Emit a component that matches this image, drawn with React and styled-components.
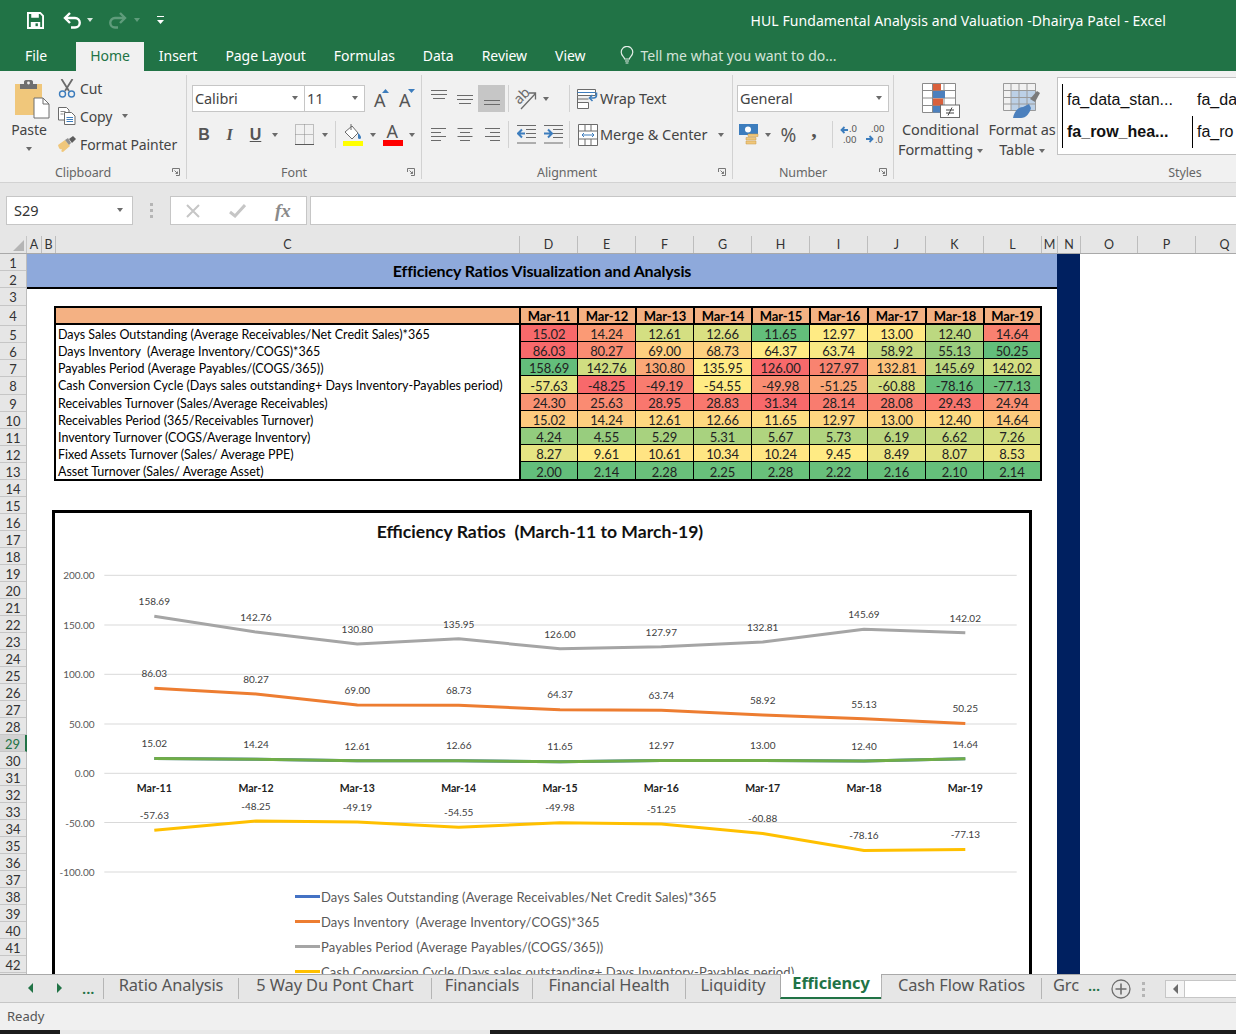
import React from 'react';
import styled, { createGlobalStyle } from 'styled-components';

const UI = '"Noto Sans", "Open Sans", sans-serif';
const CELL = 'Lato, "Open Sans", sans-serif';
const GREEN = '#217346';

const RIBBON_TABS = ['Insert', 'Page Layout', 'Formulas', 'Data', 'Review', 'View'];

const COLUMNS = [
  ['A', 15], ['B', 14], ['C', 464], ['D', 58], ['E', 58], ['F', 58], ['G', 58], ['H', 58], ['I', 58],
  ['J', 58], ['K', 58], ['L', 58], ['M', 16], ['N', 23], ['O', 57], ['P', 58], ['Q', 58],
];

const ROW_HEIGHTS = { 1: 17, 2: 17, 3: 18, 4: 20, 8: 18 };
const ROWS = Array.from({ length: 42 }, (_, i) => i + 1);

const MONTHS = ['Mar-11', 'Mar-12', 'Mar-13', 'Mar-14', 'Mar-15', 'Mar-16', 'Mar-17', 'Mar-18', 'Mar-19'];

const RATIOS = [
  { label: 'Days Sales Outstanding (Average Receivables/Net Credit Sales)*365', values: ['15.02', '14.24', '12.61', '12.66', '11.65', '12.97', '13.00', '12.40', '14.64'], scale: 'a' },
  { label: 'Days Inventory  (Average Inventory/COGS)*365', values: ['86.03', '80.27', '69.00', '68.73', '64.37', '63.74', '58.92', '55.13', '50.25'], scale: 'b' },
  { label: 'Payables Period (Average Payables/(COGS/365))', values: ['158.69', '142.76', '130.80', '135.95', '126.00', '127.97', '132.81', '145.69', '142.02'], scale: 'c', highGood: true },
  { label: 'Cash Conversion Cycle (Days sales outstanding+ Days Inventory-Payables period)', values: ['-57.63', '-48.25', '-49.19', '-54.55', '-49.98', '-51.25', '-60.88', '-78.16', '-77.13'], scale: 'd', tall: true },
  { label: 'Receivables Turnover (Sales/Average Receivables)', values: ['24.30', '25.63', '28.95', '28.83', '31.34', '28.14', '28.08', '29.43', '24.94'], scale: 'e' },
  { label: 'Receivables Period (365/Receivables Turnover)', values: ['15.02', '14.24', '12.61', '12.66', '11.65', '12.97', '13.00', '12.40', '14.64'], scale: 'e' },
  { label: 'Inventory Turnover (COGS/Average Inventory)', values: ['4.24', '4.55', '5.29', '5.31', '5.67', '5.73', '6.19', '6.62', '7.26'], scale: 'e' },
  { label: 'Fixed Assets Turnover (Sales/ Average PPE)', values: ['8.27', '9.61', '10.61', '10.34', '10.24', '9.45', '8.49', '8.07', '8.53'], scale: 'e' },
  { label: 'Asset Turnover (Sales/ Average Asset)', values: ['2.00', '2.14', '2.28', '2.25', '2.28', '2.22', '2.16', '2.10', '2.14'], scale: 'e' },
];

const RED = [248, 105, 107];
const YELLOW = [255, 235, 132];
const LIME = [99, 190, 123];

const scaleStats = {};
RATIOS.forEach(r => {
  scaleStats[r.scale] = (scaleStats[r.scale] || []).concat(r.values.map(Number));
});
Object.keys(scaleStats).forEach(k => {
  const s = [...scaleStats[k]].sort((a, b) => a - b);
  scaleStats[k] = { min: s[0], mid: s[Math.floor(s.length / 2)], max: s[s.length - 1] };
});

const mix = (a, b, t) => `rgb(${a.map((v, i) => Math.round(v + (b[i] - v) * t)).join(',')})`;

const cellColor = (value, { scale, highGood }) => {
  const { min, mid, max } = scaleStats[scale];
  const v = Number(value);
  const low = highGood ? RED : LIME;
  const high = highGood ? LIME : RED;
  if (v <= mid) return mix(low, YELLOW, (v - min) / (mid - min));
  return mix(YELLOW, high, (v - mid) / (max - mid));
};

const AXIS = ['200.00', '150.00', '100.00', '50.00', '0.00', '-50.00', '-100.00'];
const AXIS_Y = [575.3, 625, 674.3, 724, 773.3, 822.5, 872];
const POINT_X = [154.3, 256, 357.3, 458.7, 560, 661.3, 762.7, 864, 965.3];
const yOf = v => 773.3 - v * 0.989;

const SERIES = [
  { color: '#4472c4', row: 0, labels: null },
  { color: '#ed7d31', row: 1, labels: [673.3, 679.3, 690.3, 690.3, 694.3, 695.3, 700.3, 704.3, 708.3] },
  { color: '#a5a5a5', row: 2, labels: [601.3, 617.3, 629.3, 624.3, 634.3, 632.3, 627.3, 614.3, 618.3] },
  { color: '#ffc000', row: 3, labels: [815.3, 806.3, 807.3, 812.3, 807.3, 809.3, 818.3, 835.3, 834.3] },
  { color: '#70ad47', row: 5, labels: [743.3, 744.3, 746.3, 745.3, 746.3, 745.3, 745.3, 746.3, 744.3] },
];

const LEGEND = [
  ['#4472c4', RATIOS[0].label],
  ['#ed7d31', RATIOS[1].label],
  ['#a5a5a5', RATIOS[2].label],
  ['#ffc000', RATIOS[3].label],
];

const SHEET_TABS = [
  { name: 'Ratio Analysis', w: 135 },
  { name: '5 Way Du Pont Chart', w: 193 },
  { name: 'Financials', w: 101 },
  { name: 'Financial Health', w: 153 },
  { name: 'Liquidity', w: 95 },
  { name: 'Efficiency', w: 102, active: true },
  { name: 'Cash Flow Ratios', w: 160 },
];

const App = () => (
  <Window>
    <GlobalStyle />
    <TitleBar>
      <QuickAccess>
        <svg width="17" height="17" viewBox="0 0 18 18">
          <path d="M1 1h13l3 3v13H1z" fill="none" stroke="#fff" strokeWidth="2" />
          <path d="M4.5 1.5h8v4.5h-8zM4 10.5h10V16H4z" fill="#fff" />
          <path d="M9 12h2.5v3H9z" fill={GREEN} />
        </svg>
        <UndoIcon />
        <Caret $color="#d8e8de" $left={5} />
        <RedoIcon />
        <Caret $color="#5f9c7b" $left={7} />
        <CustomizeIcon />
      </QuickAccess>
      <WindowTitle>HUL Fundamental Analysis and Valuation -Dhairya Patel - Excel</WindowTitle>
    </TitleBar>

    <TabStrip>
      <RibbonTab>File</RibbonTab>
      <RibbonTab $active>Home</RibbonTab>
      {RIBBON_TABS.map(tab => (
        <RibbonTab key={tab}>{tab}</RibbonTab>
      ))}
      <TellMe>
        <svg width="14" height="19" viewBox="0 0 14 19" fill="none" stroke="#e4eee8" strokeWidth="1.2">
          <path d="M4.6 13c0-2-3.4-3.4-3.4-6.8a5.8 5.8 0 0 1 11.6 0c0 3.4-3.4 4.8-3.4 6.8z" />
          <path d="M5 15h4M5.6 17h2.8" />
        </svg>
        Tell me what you want to do...
      </TellMe>
    </TabStrip>

    <Ribbon>
      <Group $width={187}>
        <GroupBody $row>
          <PasteButton>
            <PasteIcon />
            <PasteLabel>Paste</PasteLabel>
            <Caret />
          </PasteButton>
          <ClipboardList>
            <ClipRow><CutIcon /><span>Cut</span></ClipRow>
            <ClipRow><CopyIcon /><span>Copy</span><Caret $left={10} /></ClipRow>
            <ClipRow><PainterIcon /><span>Format Painter</span></ClipRow>
          </ClipboardList>
        </GroupBody>
        <GroupFooter>Clipboard<Launcher /></GroupFooter>
      </Group>

      <Group $width={235}>
        <GroupBody $pad={5}>
          <ToolRow>
            <Combo $w={113}>Calibri<Caret $right /></Combo>
            <Combo $w={61} $noLeft>11<Caret $right /></Combo>
            <Tool $w={26} $left={4}><GrowFont up /></Tool>
            <Tool $w={24}><GrowFont /></Tool>
          </ToolRow>
          <ToolRow>
            <Tool $w={24}><LetterB>B</LetterB></Tool>
            <Tool $w={27}><LetterI>I</LetterI></Tool>
            <Tool $w={25}><LetterU>U</LetterU></Tool>
            <Tool $w={14}><Caret /></Tool>
            <Tool $w={26} $left={9}><BordersIcon /></Tool>
            <Tool $w={15}><Caret /></Tool>
            <RowSep $left={3} />
            <Tool $w={28} $left={3}><FillIcon /></Tool>
            <Tool $w={11}><Caret /></Tool>
            <Tool $w={28} $left={1}><FontColorIcon /></Tool>
            <Tool $w={10}><Caret /></Tool>
          </ToolRow>
        </GroupBody>
        <GroupFooter>Font<Launcher /></GroupFooter>
      </Group>

      <Group $width={311}>
        <GroupBody $pad={3}>
          <ToolRow>
            <Tool $w={27}><AlignIcon widths={[16, 16, 12]} top={1} /></Tool>
            <Tool $w={26}><AlignIcon widths={[16, 16, 12]} top={6} /></Tool>
            <Tool $w={27} $selected><AlignIcon widths={[16, 16, 12]} top={11} /></Tool>
            <RowSep $left={3} />
            <Tool $w={31} $left={1}><OrientationIcon /></Tool>
            <Tool $w={10}><Caret /></Tool>
            <RowSep $left={18} />
            <Tool $w={25} $left={5}><WrapIcon /></Tool>
            <ToolText>Wrap Text</ToolText>
          </ToolRow>
          <ToolRow>
            <Tool $w={27}><AlignIcon widths={[15, 10, 15, 10]} align="start" /></Tool>
            <Tool $w={26}><AlignIcon widths={[15, 10, 15, 10]} align="middle" /></Tool>
            <Tool $w={27}><AlignIcon widths={[15, 10, 15, 10]} align="end" /></Tool>
            <RowSep $left={3} />
            <Tool $w={33} $left={1}><IndentIcon /></Tool>
            <Tool $w={21}><IndentIcon right /></Tool>
            <RowSep $left={5} />
            <Tool $w={25} $left={5}><MergeIcon /></Tool>
            <ToolText $wide>Merge &amp; Center</ToolText>
            <Caret $left={11} />
          </ToolRow>
        </GroupBody>
        <GroupFooter>Alignment<Launcher /></GroupFooter>
      </Group>

      <Group $width={161}>
        <GroupBody $pad={4}>
          <ToolRow>
            <Combo $w={152}>General<Caret $right /></Combo>
          </ToolRow>
          <ToolRow>
            <Tool $w={24}><CurrencyIcon /></Tool>
            <Tool $w={14}><Caret /></Tool>
            <Tool $w={27}><Percent>%</Percent></Tool>
            <Tool $w={24}><Comma>,</Comma></Tool>
            <RowSep $left={6} />
            <Tool $w={27} $left={3}><DecimalIcon /></Tool>
            <Tool $w={25}><DecimalIcon more /></Tool>
          </ToolRow>
        </GroupBody>
        <GroupFooter>Number<Launcher /></GroupFooter>
      </Group>

      <Group $width={582} $last>
        <GroupBody $row>
          <BigButton $w={93}>
            <ConditionalIcon />
            <BigLabel>Conditional</BigLabel>
            <BigLabel>Formatting<Caret $left={4} /></BigLabel>
          </BigButton>
          <BigButton $w={70}>
            <TableStyleIcon />
            <BigLabel>Format as</BigLabel>
            <BigLabel>Table<Caret $left={4} /></BigLabel>
          </BigButton>
          <Gallery>
            <StyleCell $line>fa_data_stan...</StyleCell>
            <StyleCell>fa_da</StyleCell>
            <StyleCell $line $bold>fa_row_hea...</StyleCell>
            <StyleCell $line>fa_ro</StyleCell>
          </Gallery>
        </GroupBody>
        <GroupFooter $plain>Styles</GroupFooter>
      </Group>
    </Ribbon>

    <FormulaBar>
      <NameBox>S29<Caret $right /></NameBox>
      <Grip />
      <FormulaButtons>
        <svg width="14" height="14" viewBox="0 0 14 14" stroke="#c6c6c6" strokeWidth="2"><path d="M1 1l12 12M13 1L1 13" /></svg>
        <svg width="17" height="14" viewBox="0 0 17 14" fill="none" stroke="#c6c6c6" strokeWidth="3"><path d="M1 8l5 4L16 1" /></svg>
        <FxLabel>fx</FxLabel>
      </FormulaButtons>
      <FormulaInput />
    </FormulaBar>

    <ColumnHeader>
      <Corner>
        <svg width="12" height="12" viewBox="0 0 12 12"><path d="M12 1v11H1z" fill="#b5b5b5" /></svg>
      </Corner>
      {COLUMNS.map(([name, w]) => (
        <ColumnCell key={name} $w={w}>{name}</ColumnCell>
      ))}
    </ColumnHeader>

    <Sheet>
      <RowHeader>
        {ROWS.map(n => (
          <RowCell key={n} $h={ROW_HEIGHTS[n] || 17} $active={n === 29}>{n}</RowCell>
        ))}
      </RowHeader>
      <SheetBody>
        <Banner>Efficiency Ratios Visualization and Analysis</Banner>
        <RatioTable>
          <HeadRow>
            <HeadBlank />
            {MONTHS.map(m => (
              <HeadCell key={m}>{m}</HeadCell>
            ))}
          </HeadRow>
          {RATIOS.map(row => (
            <DataRow key={row.label} $tall={row.tall}>
              <LabelCell>{row.label}</LabelCell>
              {row.values.map((v, i) => (
                <ValueCell key={i} style={{ background: cellColor(v, row) }}>{v}</ValueCell>
              ))}
            </DataRow>
          ))}
        </RatioTable>
        <ChartFrame>
          <ChartTitle>Efficiency Ratios  (March-11 to March-19)</ChartTitle>
          <PlotSvg width="974" height="331" viewBox="55 553 974 331">
            {AXIS.map((label, i) => (
              <g key={label}>
                <line x1="104.3" x2="1016.7" y1={AXIS_Y[i]} y2={AXIS_Y[i]} stroke="#d9d9d9" strokeWidth="1" />
                <AxisText x="94.5" y={AXIS_Y[i]} textAnchor="end" dominantBaseline="central">{label}</AxisText>
              </g>
            ))}
            {SERIES.map(s => (
              <polyline
                key={s.color}
                fill="none"
                stroke={s.color}
                strokeWidth="3"
                strokeLinejoin="round"
                points={RATIOS[s.row].values.map((v, i) => `${POINT_X[i]},${yOf(Number(v))}`).join(' ')}
              />
            ))}
            {SERIES.filter(s => s.labels).map(s =>
              RATIOS[s.row].values.map((v, i) => (
                <DataText key={s.color + i} x={POINT_X[i]} y={s.labels[i]} textAnchor="middle" dominantBaseline="central">{v}</DataText>
              ))
            )}
            {MONTHS.map((m, i) => (
              <MonthText key={m} x={POINT_X[i]} y="788" textAnchor="middle" dominantBaseline="central">{m}</MonthText>
            ))}
          </PlotSvg>
          <Legend>
            {LEGEND.map(([color, label]) => (
              <LegendRow key={label}>
                <LegendLine $color={color} />
                {label}
              </LegendRow>
            ))}
          </Legend>
        </ChartFrame>
      </SheetBody>
      <NavyColumn />
    </Sheet>

    <SheetTabBar>
      <TabNav>
        <NavArrow $left />
        <NavArrow />
        <NavDots>...</NavDots>
      </TabNav>
      {SHEET_TABS.map(tab => (
        <SheetTab key={tab.name} $w={tab.w} $active={tab.active}>{tab.name}</SheetTab>
      ))}
      <SheetTab $w={62} $shift>
        Grc <NavDots $inline>...</NavDots>
      </SheetTab>
      <AddSheet>
        <svg width="20" height="20" viewBox="0 0 20 20" fill="none" stroke="#6f6f6f">
          <circle cx="10" cy="10" r="9" strokeWidth="1.3" />
          <path d="M10 4.5v11M4.5 10h11" strokeWidth="1.6" />
        </svg>
      </AddSheet>
      <TabGrip />
      <ScrollButton><NavArrow $left $grey /></ScrollButton>
      <ScrollTrack />
    </SheetTabBar>

    <StatusBar>Ready</StatusBar>
    <BottomStrip>
      <StripDark $w={60} />
      <StripLight />
      <StripDark $grow />
    </BottomStrip>
  </Window>
);

const UndoIcon = () => (
  <svg width="19" height="17" viewBox="0 0 19 17" fill="none" stroke="#fff" strokeWidth="2.4" style={{ marginLeft: 19 }}>
    <path d="M7 1L2 6l5 5" />
    <path d="M2 6h10a4.6 4.6 0 0 1 0 9.5H8" />
  </svg>
);

const RedoIcon = () => (
  <svg width="19" height="17" viewBox="0 0 19 17" fill="none" stroke="#5f9c7b" strokeWidth="2.4" style={{ marginLeft: 15 }}>
    <path d="M12 1l5 5-5 5" />
    <path d="M17 6H7a4.6 4.6 0 0 0 0 9.5h3" />
  </svg>
);

const CustomizeIcon = () => (
  <svg width="7" height="10" viewBox="0 0 7 10" fill="#fff" style={{ marginLeft: 17 }}>
    <path d="M0 1h7v1H0zM0 5h7L3.5 9z" />
  </svg>
);

const Launcher = () => (
  <LauncherBox>
    <svg width="8" height="8" viewBox="0 0 8 8" fill="none" stroke="#777">
      <path d="M.5 4V.5H7.5M7.5.5v7H4" />
      <path d="M2.5 2.5l3 3M5.5 3.5v2h-2" />
    </svg>
  </LauncherBox>
);

const PasteIcon = () => (
  <svg width="36" height="40" viewBox="0 0 36 40" style={{ marginLeft: 6 }}>
    <rect x="1" y="5" width="27" height="31" fill="#f0c77b" />
    <path d="M6 5h4V2.5A2 2 0 0 1 12 1h5a2 2 0 0 1 2 1.5V5h4v5H6z" fill="#6f6f6f" />
    <circle cx="14.5" cy="4" r="1.4" fill="#f1f1f1" />
    <path d="M20 19h9l6 6v14H20z" fill="#fff" stroke="#6f6f6f" />
    <path d="M29 19v6h6" fill="none" stroke="#6f6f6f" />
  </svg>
);

const CutIcon = () => (
  <svg width="17" height="19" viewBox="0 0 17 19" fill="none">
    <path d="M3 0l7.5 12M14 0L6.5 12" stroke="#6b6b6b" strokeWidth="1.8" />
    <circle cx="4" cy="15" r="3" stroke="#3d7dbd" strokeWidth="1.4" />
    <circle cx="13" cy="15" r="3" stroke="#3d7dbd" strokeWidth="1.4" />
  </svg>
);

const CopyIcon = () => (
  <svg width="18" height="18" viewBox="0 0 18 18" fill="#fff" stroke="#6b6b6b">
    <path d="M.5.5h8l2.5 2.5v10H.5z" />
    <path d="M6.5 5.5h7l3.5 3.5v8.5H6.5z" />
    <path d="M8.5 10.5h6.5M8.5 12.5h6.5M8.5 14.5h6.5" stroke="#3d7dbd" />
    <path d="M2.5 4.5h5M2.5 7h3" stroke="#8a8a8a" />
  </svg>
);

const PainterIcon = () => (
  <svg width="18" height="16" viewBox="0 0 18 16">
    <path d="M0 9l7-5 5 6-7 6c-2 0-2-1-1-3-2 1-3 0-4-4z" fill="#f0c77b" />
    <path d="M7 4l3-2 3 5-2 2z" fill="#8f8f8f" />
    <path d="M11 3l4-3 3 3-4 4z" fill="#5d5d5d" />
  </svg>
);

const GrowFont = ({ up }) => (
  <svg width="17" height="20" viewBox="0 0 17 20" overflow="visible">
    <FontGlyph x="0" y="18">A</FontGlyph>
    <path d={up ? 'M8 4l3.5-4L15 4z' : 'M9 0h7l-3.5 4z'} fill="#3d7dbd" />
  </svg>
);

const BordersIcon = () => (
  <svg width="19" height="21" viewBox="0 0 19 21" fill="none" stroke="#8a8a8a" strokeDasharray="1 1">
    <path d="M.5.5h18v20H.5zM9.5.5v20M.5 10.5h18" />
    <path d="M0 20.5h19" stroke="#5a5a5a" strokeDasharray="none" />
  </svg>
);

const FillIcon = () => (
  <svg width="20" height="23" viewBox="0 0 20 23">
    <path d="M2 9l7-6 6 7-6 6z" fill="#fff" stroke="#6b6b6b" />
    <path d="M8 1v6" stroke="#6b6b6b" />
    <path d="M15 10c2 2 3 3 3 4.5a1.5 1.5 0 0 1-3 0z" fill="#3d7dbd" />
    <rect x="0" y="18" width="20" height="5" fill="#ffff00" />
  </svg>
);

const FontColorIcon = () => (
  <svg width="20" height="23" viewBox="0 0 20 23" overflow="visible">
    <FontGlyph x="3.5" y="15">A</FontGlyph>
    <rect x="0" y="17" width="20" height="6" fill="#ff0000" />
  </svg>
);

const AlignIcon = ({ widths, top = 1, align }) => {
  const W = 18;
  return (
    <svg width="18" height="19" viewBox="0 0 18 19" stroke="#6b6b6b">
      {widths.map((w, i) => {
        let x = (W - w) / 2;
        if (align === 'start') x = 1;
        if (align === 'end') x = W - w - 1;
        const y = (align ? 3 : top) + i * 4 + 0.5;
        return <line key={i} x1={x} x2={x + w} y1={y} y2={y} />;
      })}
    </svg>
  );
};

const OrientationIcon = () => (
  <svg width="24" height="22" viewBox="0 0 24 22" overflow="visible">
    <OrientText x="1" y="13" transform="rotate(-45 8 10)">ab</OrientText>
    <path d="M7 21L21 6M15 5h6.5v6.5" fill="none" stroke="#6b6b6b" strokeWidth="1.3" />
  </svg>
);

const WrapIcon = () => (
  <svg width="21" height="22" viewBox="0 0 21 22" fill="none" stroke="#6b6b6b">
    <path d="M.5 1.5h18v6H.5zM.5 7.5v13h11v-6H.5M.5 11h11" fill="#fff" />
    <path d="M.5 4.5h18" stroke="#3d7dbd" />
    <path d="M13 10h3.5a3 3 0 0 0 3-3V4.5" stroke="#3d7dbd" strokeWidth="1.6" />
    <path d="M15.5 7l-3 3 3 3" stroke="#3d7dbd" strokeWidth="1.6" />
  </svg>
);

const MergeIcon = () => (
  <svg width="20" height="22" viewBox="0 0 20 22" fill="none" stroke="#6b6b6b">
    <path d="M.5.5h19v21H.5zM.5 7h19M.5 15h19M7 .5V7M13 .5V7M7 15v6.5M13 15v6.5" fill="#fff" />
    <path d="M4 11h12M6 9l-2 2 2 2M14 9l2 2-2 2" stroke="#3d7dbd" />
  </svg>
);

const IndentIcon = ({ right }) => (
  <svg width="19" height="19" viewBox="0 0 19 19" fill="none">
    <path d="M0 .5h19M9 4.5h10M9 8.5h10M9 12.5h10M0 18h19" stroke="#6b6b6b" />
    <path d={right ? 'M0 8.5h7M4 4.5l4 4-4 4' : 'M8 8.5H1M5 4.5l-4 4 4 4'} stroke="#3d7dbd" strokeWidth="2" />
  </svg>
);

const CurrencyIcon = () => (
  <svg width="20" height="21" viewBox="0 0 20 21">
    <rect x="0" y="0" width="19" height="11" fill="#3d7dbd" />
    <circle cx="9" cy="5.5" r="3" fill="#fff" />
    <path d="M9 10h10v2.5H9zM7 13.5h10V16H7zM7 17h10v3H7z" fill="#f0c77b" stroke="#c89b4a" strokeWidth=".5" />
  </svg>
);

const DecimalIcon = ({ more }) => (
  <svg width="19" height="19" viewBox="0 0 19 19" overflow="visible">
    {more ? (
      <>
        <DecimalText x="5" y="7">.00</DecimalText>
        <path d="M0 14h6M3.5 11l3 3-3 3" fill="none" stroke="#3d7dbd" strokeWidth="1.8" />
        <DecimalText x="9" y="18">.0</DecimalText>
      </>
    ) : (
      <>
        <path d="M8 5H2M4.5 2l-3 3 3 3" fill="none" stroke="#3d7dbd" strokeWidth="1.8" />
        <DecimalText x="9" y="7">.0</DecimalText>
        <DecimalText x="3" y="18">.00</DecimalText>
      </>
    )}
  </svg>
);

const ConditionalIcon = () => (
  <svg width="38" height="35" viewBox="0 0 38 35">
    <path d="M.5.5h33v29H.5zM.5 7.5h33M.5 15h33M.5 22.5h33M10.5.5v29M22 .5v29" fill="#fff" stroke="#8a8a8a" />
    <rect x="11" y="1" width="8" height="6.5" fill="#d9603c" />
    <rect x="11" y="8" width="12" height="7" fill="#4c80bd" />
    <rect x="11" y="15.5" width="10" height="7" fill="#d9603c" />
    <rect x="11" y="23" width="7" height="6.5" fill="#4c80bd" />
    <rect x="18.5" y="22" width="19" height="12.5" fill="#fff" stroke="#6b6b6b" />
    <path d="M24 27h8M24 30h8M30 24.5l-4 8" stroke="#444" fill="none" />
  </svg>
);

const TableStyleIcon = () => (
  <svg width="38" height="35" viewBox="0 0 38 35">
    <rect x="8" y="8" width="25" height="20" fill="#bcd0e6" />
    <path d="M.5.5h32v27H.5zM.5 7.5h32M.5 14.5h32M.5 21h32M8 .5v27M16 .5v27M24 .5v27" fill="none" stroke="#9a9a9a" />
    <path d="M27 16l7-8 3 2-5 9z" fill="#7b7b7b" />
    <path d="M10 35c1-6 5-11 10-11l6-3 2 4c-1 5-5 10-10 10z" fill="#4c80bd" />
  </svg>
);

const GlobalStyle = createGlobalStyle`
  html, body {
    margin: 0;
    padding: 0;
    background: #fff;
  }
  * {
    box-sizing: border-box;
  }
`;

const Window = styled.div`
  width: 1236px;
  height: 1034px;
  display: flex;
  flex-direction: column;
  overflow: hidden;
  font-family: ${UI};
  color: #444;
`;

const TitleBar = styled.div`
  height: 42px;
  flex: none;
  display: flex;
  align-items: center;
  background: ${GREEN};
  color: #fff;
`;

const QuickAccess = styled.div`
  display: flex;
  align-items: center;
  padding: 0 0 2px 27px;
`;

const WindowTitle = styled.div`
  margin-left: auto;
  padding: 0 70px 2px 0;
  font-size: 14px;
  letter-spacing: 0.08px;
`;

const Caret = styled.span`
  display: inline-block;
  width: 0;
  height: 0;
  flex: none;
  border-left: 3.5px solid transparent;
  border-right: 3.5px solid transparent;
  border-top: 4px solid ${p => p.$color || '#6b6b6b'};
  margin-left: ${p => (p.$right ? 'auto' : `${p.$left || 0}px`)};
  vertical-align: middle;
`;

const TabStrip = styled.div`
  height: 29px;
  flex: none;
  display: flex;
  align-items: stretch;
  padding-left: 11px;
  background: ${GREEN};
`;

const RibbonTab = styled.div`
  display: flex;
  align-items: center;
  padding: 0 14px 3px;
  margin: 0 ${p => (p.$active ? '1px' : 0)} 0 ${p => (p.$active ? '15px' : 0)};
  font-size: 14px;
  letter-spacing: -0.05px;
  color: ${p => (p.$active ? GREEN : '#fff')};
  background: ${p => (p.$active ? '#f1f1f1' : 'transparent')};
`;

const TellMe = styled.div`
  display: flex;
  align-items: center;
  gap: 6px;
  margin-left: 21px;
  padding-bottom: 3px;
  font-size: 14px;
  color: #d3e3d9;
`;

const Ribbon = styled.div`
  height: 112px;
  flex: none;
  display: flex;
  align-items: stretch;
  padding: 4px 0 3px;
  background: #f1f1f1;
  border-bottom: 1px solid #d2d2d2;
`;

const Group = styled.div`
  flex: 0 0 ${p => p.$width}px;
  display: flex;
  flex-direction: column;
  border-right: ${p => (p.$last ? 'none' : '1px solid #d2d2d2')};
`;

const GroupBody = styled.div`
  height: 89px;
  display: flex;
  flex-direction: ${p => (p.$row ? 'row' : 'column')};
  gap: ${p => (p.$row ? 0 : '9px')};
  padding: ${p => (p.$row ? '0' : `10px 0 0 ${p.$pad}px`)};
`;

const GroupFooter = styled.div`
  height: 15px;
  position: relative;
  padding: 1px ${p => (p.$plain ? 0 : '20px')} 0 0;
  font-size: 12.5px;
  line-height: 15px;
  letter-spacing: -0.1px;
  text-align: center;
  color: #666;
`;

const LauncherBox = styled.span`
  position: absolute;
  right: 6px;
  top: 4px;
  display: flex;
`;

const PasteButton = styled.div`
  width: 58px;
  display: flex;
  flex-direction: column;
  align-items: center;
  padding-top: 4px;
  color: #444;
`;

const PasteLabel = styled.div`
  font-size: 14px;
  line-height: 20px;
  margin: 1px 0 7px;
  letter-spacing: -0.1px;
`;

const ClipboardList = styled.div`
  display: flex;
  flex-direction: column;
  margin-top: -1px;
`;

const ClipRow = styled.div`
  height: 28px;
  display: flex;
  align-items: center;
  font-size: 14px;
  letter-spacing: -0.1px;
  color: #444;
  white-space: nowrap;

  svg {
    width: 18px;
    margin-right: 4px;
    flex: none;
  }
`;

const ToolRow = styled.div`
  height: 27px;
  display: flex;
  align-items: center;
`;

const Tool = styled.div`
  flex: 0 0 ${p => p.$w}px;
  height: 27px;
  margin-left: ${p => p.$left || 0}px;
  display: flex;
  align-items: center;
  justify-content: center;
  background: ${p => (p.$selected ? '#c6c6c6' : 'transparent')};
`;

const RowSep = styled.div`
  width: 1px;
  height: 27px;
  flex: none;
  margin-left: ${p => p.$left || 0}px;
  background: #d2d2d2;
`;

const ToolText = styled.span`
  padding-bottom: 2px;
  font-size: 14.5px;
  letter-spacing: ${p => (p.$wide ? '-0.05px' : '-0.15px')};
  color: #444;
  white-space: nowrap;
`;

const Combo = styled.div`
  flex: 0 0 ${p => p.$w}px;
  height: 27px;
  display: flex;
  align-items: center;
  padding: 0 6px 2px 2px;
  margin-left: ${p => (p.$noLeft ? '-1px' : 0)};
  background: #fff;
  border: 1px solid #c6c6c6;
  font-size: 14.5px;
  letter-spacing: -0.1px;
  color: #444;
`;

const LetterB = styled.span`
  font: bold 16px "Liberation Sans", sans-serif;
  color: #555;
`;

const LetterI = styled.span`
  font: italic bold 16px "Liberation Serif", serif;
  color: #555;
`;

const LetterU = styled.span`
  font: bold 16px "Liberation Sans", sans-serif;
  color: #555;
  text-decoration: underline;
`;

const FontGlyph = styled.text`
  font: 18px ${UI};
  fill: #555;
`;

const OrientText = styled.text`
  font: 14px ${UI};
  fill: #6b6b6b;
`;

const DecimalText = styled.text`
  font: 9.5px ${UI};
  fill: #555;
`;

const Percent = styled.span`
  font-size: 19px;
  color: #555;
`;

const Comma = styled.span`
  font: bold 22px "Liberation Serif", serif;
  color: #555;
  margin-top: -10px;
`;

const BigButton = styled.div`
  flex: 0 0 ${p => p.$w}px;
  display: flex;
  flex-direction: column;
  align-items: center;
  padding-top: 8px;

  svg {
    margin-bottom: 1px;
  }
`;

const BigLabel = styled.div`
  font-size: 14.5px;
  line-height: 20px;
  letter-spacing: -0.1px;
  color: #444;
  white-space: nowrap;
`;

const Gallery = styled.div`
  width: 300px;
  height: 78px;
  margin: 2px 0 0 0;
  display: grid;
  grid-template-columns: 130px 1fr;
  grid-auto-rows: 1fr;
  padding: 6px 0 6px 4px;
  background: #fff;
  border: 1px solid #c2c2c2;
`;

const StyleCell = styled.div`
  display: flex;
  align-items: center;
  padding: 0 0 1px 4px;
  border-left: 1px solid ${p => (p.$line ? '#000' : 'transparent')};
  font: ${p => (p.$bold ? 'bold' : 'normal')} 16px "Liberation Sans", sans-serif;
  color: #111;
  white-space: nowrap;
`;

const FormulaBar = styled.div`
  height: 53px;
  flex: none;
  display: flex;
  align-items: flex-start;
  padding: 13px 0 0 6px;
  background: #e6e6e6;
`;

const NameBox = styled.div`
  width: 127px;
  height: 29px;
  display: flex;
  align-items: center;
  padding: 0 9px 1px 7px;
  background: #fff;
  border: 1px solid #c6c6c6;
  font-size: 14.5px;
  color: #333;
`;

const Grip = styled.div`
  width: 3px;
  height: 15px;
  margin: 7px 17px 0 17px;
  background: repeating-linear-gradient(#b5b5b5 0 3px, transparent 3px 6px);
`;

const FormulaButtons = styled.div`
  width: 137px;
  height: 29px;
  display: flex;
  align-items: center;
  gap: 29px;
  padding-left: 15px;
  background: #fff;
  border: 1px solid #c6c6c6;
`;

const FxLabel = styled.span`
  font: italic bold 19px "Liberation Serif", serif;
  color: #8a8a8a;
`;

const FormulaInput = styled.div`
  flex: 1;
  height: 29px;
  margin-left: 3px;
  background: #fff;
  border: 1px solid #c6c6c6;
  border-right: none;
`;

const ColumnHeader = styled.div`
  height: 18px;
  flex: none;
  display: flex;
  background: #e6e6e6;
  border-bottom: 1px solid #a9a9a9;
`;

const Corner = styled.div`
  flex: 0 0 27px;
  display: flex;
  align-items: flex-end;
  justify-content: flex-end;
  padding: 0 2px 2px 0;
  border-right: 1px solid #c6c6c6;
`;

const ColumnCell = styled.div`
  flex: 0 0 ${p => p.$w}px;
  display: flex;
  align-items: center;
  justify-content: center;
  font: 12.5px ${CELL};
  color: #333;
  border-right: 1px solid #bdbdbd;
`;

const Sheet = styled.div`
  height: 720px;
  flex: none;
  display: flex;
  overflow: hidden;
  background: #fff;
`;

const RowHeader = styled.div`
  flex: 0 0 27px;
  display: flex;
  flex-direction: column;
  background: #e6e6e6;
  border-right: 1px solid #bdbdbd;
`;

const RowCell = styled.div`
  flex: 0 0 ${p => p.$h}px;
  min-height: 0;
  display: flex;
  align-items: center;
  justify-content: center;
  padding-top: 1px;
  font: 13px/14px ${CELL};
  color: ${p => (p.$active ? GREEN : '#333')};
  background: ${p => (p.$active ? '#d2d2d2' : 'transparent')};
  border-bottom: 1px solid #c6c6c6;
  border-right: ${p => (p.$active ? `2px solid ${GREEN}` : 'none')};
  margin-right: ${p => (p.$active ? '-1px' : 0)};
`;

const SheetBody = styled.div`
  flex: 0 0 1030px;
  display: flex;
  flex-direction: column;
`;

const Banner = styled.div`
  height: 35px;
  flex: none;
  display: flex;
  align-items: center;
  justify-content: center;
  background: #8ea9db;
  border-bottom: 2px solid #000;
  font: bold 16px ${CELL};
  letter-spacing: -0.13px;
  color: #000;
`;

const RatioTable = styled.div`
  width: 988px;
  flex: none;
  margin: 17px 0 0 27px;
  border: 2px solid #000;
  color: #000;
`;

const HeadRow = styled.div`
  height: 17px;
  display: grid;
  grid-template-columns: 463px repeat(8, 58px) 57px;
  background: #f4b183;
  border-bottom: 2px solid #000;
`;

const HeadBlank = styled.div``;

const HeadCell = styled.div`
  display: flex;
  align-items: center;
  justify-content: center;
  border-left: 2px solid #000;
  font: bold 13px ${CELL};
  letter-spacing: -0.15px;
`;

const DataRow = styled.div`
  height: ${p => (p.$tall ? 18 : 17)}px;
  display: grid;
  grid-template-columns: 463px repeat(8, 58px) 57px;
  grid-template-rows: 1fr;
`;

const LabelCell = styled.div`
  display: flex;
  align-items: center;
  min-height: 0;
  padding: 2px 0 0 2px;
  font: 12.5px/14px ${CELL};
  white-space: pre;
`;

const ValueCell = styled.div`
  display: flex;
  align-items: center;
  justify-content: center;
  min-height: 0;
  padding-top: 2px;
  border-left: 1px solid #000;
  border-bottom: 1px solid #000;
  font: 13px/14px ${CELL};
  letter-spacing: -0.1px;
  color: #222;

  &:nth-child(2) {
    border-left-width: 2px;
  }

  ${DataRow}:last-child & {
    border-bottom: none;
  }
`;

const ChartFrame = styled.div`
  width: 980px;
  flex: none;
  margin: 29px 0 0 25px;
  border: 3px solid #000;
  background: #fff;
`;

const ChartTitle = styled.div`
  height: 40px;
  display: flex;
  align-items: center;
  justify-content: center;
  padding: 0 4px 4px 0;
  font: bold 17.6px ${CELL};
  white-space: pre;
  color: #111;
`;

const PlotSvg = styled.svg`
  display: block;
`;

const AxisText = styled.text`
  font: 10px ${CELL};
  fill: #595959;
`;

const DataText = styled.text`
  font: 10px ${CELL};
  fill: #404040;
`;

const MonthText = styled.text`
  font: bold 10.5px ${CELL};
  fill: #222;
`;

const Legend = styled.div`
  display: flex;
  flex-direction: column;
  padding: 0 0 40px 240px;
`;

const LegendRow = styled.div`
  height: 25px;
  display: flex;
  align-items: center;
  font: 13px ${CELL};
  letter-spacing: 0.14px;
  color: #595959;
  white-space: pre;
`;

const LegendLine = styled.span`
  width: 25px;
  height: 3px;
  margin-right: 1px;
  background: ${p => p.$color};
`;

const NavyColumn = styled.div`
  flex: 0 0 23px;
  background: #002060;
`;

const SheetTabBar = styled.div`
  height: 29px;
  flex: none;
  display: flex;
  align-items: flex-start;
  background: #e6e6e6;
  border-top: 1px solid #a9a9a9;
  border-bottom: 1px solid #c6c6c6;
`;

const TabNav = styled.div`
  flex: 0 0 103px;
  height: 25px;
  display: flex;
  align-items: center;
  padding-left: 28px;
  gap: 24px;
`;

const NavArrow = styled.span`
  width: 0;
  height: 0;
  border-top: 5px solid transparent;
  border-bottom: 5px solid transparent;
  ${p => (p.$left
    ? `border-right: 5px solid ${p.$grey ? '#6b6b6b' : GREEN};`
    : `border-left: 5px solid ${GREEN};`)}
`;

const NavDots = styled.span`
  color: ${GREEN};
  font-size: 15px;
  margin-left: ${p => (p.$inline ? '9px' : '-4px')};
  font-weight: 600;
`;

const SheetTab = styled.div`
  flex: 0 0 ${p => p.$w}px;
  height: ${p => (p.$active ? '25px' : '21px')};
  margin-top: ${p => (p.$active ? '-1px' : '3px')};
  display: flex;
  align-items: center;
  justify-content: center;
  padding: 0 0 ${p => (p.$active ? '6px' : '8px')} ${p => (p.$shift ? '8px' : 0)};
  font-size: 16.4px;
  letter-spacing: -0.1px;
  font-weight: ${p => (p.$active ? 700 : 400)};
  color: ${p => (p.$active ? GREEN : '#555')};
  background: ${p => (p.$active ? '#fff' : 'transparent')};
  border-left: 1px solid ${p => (p.$active ? '#a9a9a9' : '#b5b5b5')};
  ${p => p.$active && `
    border-right: 1px solid #a9a9a9;
    border-bottom: 2px solid ${GREEN};
    margin-right: -1px;
  `}
  white-space: nowrap;
`;

const AddSheet = styled.div`
  flex: 0 0 20px;
  margin: 4px 0 0 8px;
  display: flex;
`;

const TabGrip = styled.div`
  width: 3px;
  height: 15px;
  margin: 7px 20px 0 11px;
  background: repeating-linear-gradient(#b5b5b5 0 3px, transparent 3px 6px);
`;

const ScrollButton = styled.div`
  width: 20px;
  height: 18px;
  margin-top: 5px;
  display: flex;
  align-items: center;
  justify-content: center;
  background: #f4f4f4;
  border: 1px solid #c6c6c6;
`;

const ScrollTrack = styled.div`
  flex: 1;
  height: 18px;
  margin-top: 5px;
  background: #fff;
  border-top: 1px solid #c6c6c6;
  border-bottom: 1px solid #c6c6c6;
`;

const StatusBar = styled.div`
  height: 27px;
  flex: none;
  display: flex;
  align-items: center;
  padding: 0 0 2px 7px;
  background: #f0f0f0;
  font-size: 13px;
  color: #555;
`;

const BottomStrip = styled.div`
  height: 4px;
  flex: none;
  display: flex;
`;

const StripDark = styled.div`
  flex: ${p => (p.$grow ? 1 : `0 0 ${p.$w}px`)};
  background: #1c1c1c;
`;

const StripLight = styled.div`
  flex: 0 0 430px;
  background: #e8e8e8;
`;

export default App;
